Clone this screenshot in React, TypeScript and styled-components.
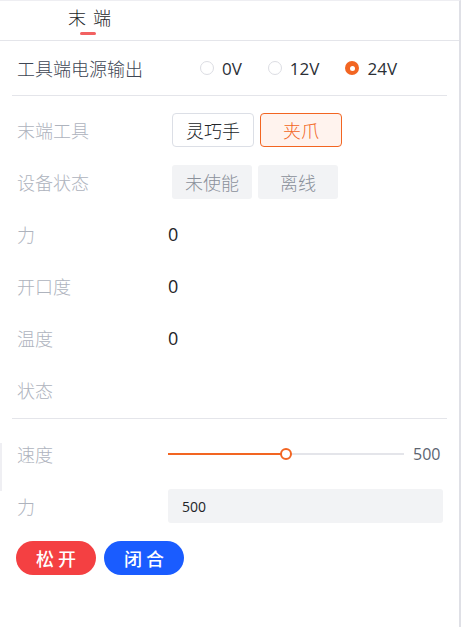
import React, { useState } from 'react';
import styled, { createGlobalStyle } from 'styled-components';

const GlobalStyle = createGlobalStyle`
  html, body {
    margin: 0;
    padding: 0;
    background: #ffffff;
  }
  body {
    font-family: "Open Sans", "Noto Sans CJK SC", sans-serif;
  }
  * {
    box-sizing: border-box;
  }
`;

const Panel = styled.div`
  position: relative;
  width: 461px;
  height: 627px;
  background: #ffffff;
  border-top: 1px solid #eeeef2;
  border-right: 2px solid #dfe0e6;
  overflow: hidden;
`;

const TabBar = styled.div`
  height: 40px;
  border-bottom: 1px solid #e4e5ea;
  display: flex;
  padding-left: 68px;
`;

const Tab = styled.div`
  position: relative;
  font-size: 18px;
  font-weight: 300;
  line-height: 34px;
  letter-spacing: 7px;
  color: #222428;

  &::after {
    content: '';
    position: absolute;
    left: 12px;
    bottom: 5px;
    width: 16px;
    height: 3px;
    border-radius: 2px;
    background: #f26161;
  }
`;

const Section = styled.div<{ $pt?: number; $pb?: number; $divider?: boolean }>`
  margin: 0 12px;
  padding: ${({ $pt = 0 }) => $pt}px 0 ${({ $pb = 0 }) => $pb}px 5px;
  border-bottom: ${({ $divider }) => ($divider ? '1px solid #e4e5ea' : 'none')};
`;

const Row = styled.div<{ $h?: number }>`
  display: flex;
  align-items: center;
  height: ${({ $h = 52 }) => $h}px;
`;

const Label = styled.div<{ $dark?: boolean; $w?: number }>`
  width: ${({ $w = 151 }) => $w}px;
  flex-shrink: 0;
  font-size: 18px;
  font-weight: 300;
  color: ${({ $dark }) => ($dark ? '#3d4553' : '#aeb3bd')};
`;

const RadioGroup = styled.div`
  display: flex;
  align-items: center;
  gap: 26px;
`;

const RadioItem = styled.label`
  display: flex;
  align-items: center;
  gap: 8px;
  font-size: 17px;
  color: #2b2f36;
  cursor: pointer;
`;

const RadioDot = styled.span<{ $on: boolean }>`
  width: 14px;
  height: 14px;
  border-radius: 50%;
  border: ${({ $on }) => ($on ? 'none' : '1.5px solid #dcdde3')};
  background: ${({ $on }) => ($on ? '#f26522' : '#ffffff')};
  display: flex;
  align-items: center;
  justify-content: center;

  &::after {
    content: '';
    width: 5px;
    height: 5px;
    border-radius: 50%;
    background: #ffffff;
    display: ${({ $on }) => ($on ? 'block' : 'none')};
  }
`;

const Options = styled.div`
  display: flex;
  gap: 6px;
  margin-left: 4px;
`;

const ToolButton = styled.button<{ $active: boolean }>`
  width: 82px;
  height: 34px;
  border-radius: 4px;
  font-family: inherit;
  font-size: 18px;
  font-weight: 300;
  cursor: pointer;
  border: 1px solid ${({ $active }) => ($active ? '#f26522' : '#dcdfe6')};
  background: ${({ $active }) => ($active ? '#fff3ee' : '#ffffff')};
  color: ${({ $active }) => ($active ? '#f26522' : '#222428')};
  padding: 0;
`;

const StatusTag = styled.div`
  width: 80px;
  height: 34px;
  border-radius: 3px;
  background: #f2f3f5;
  color: #8a909a;
  font-size: 18px;
  font-weight: 300;
  display: flex;
  align-items: center;
  justify-content: center;
`;

const Value = styled.div`
  font-size: 18px;
  color: #222428;
`;

const SpeedRow = styled(Row)`
  &::before {
    content: '';
    position: absolute;
    left: 0;
    top: 442px;
    width: 2px;
    height: 48px;
    background: #efeff3;
  }
`;

const SliderWrap = styled.div`
  position: relative;
  width: 236px;
  height: 14px;
  display: flex;
  align-items: center;
`;

const Track = styled.div`
  width: 100%;
  height: 2px;
  background: #e4e5ea;
`;

const Fill = styled.div`
  position: absolute;
  left: 0;
  height: 2px;
  background: #f26522;
`;

const Thumb = styled.div`
  position: absolute;
  width: 12px;
  height: 12px;
  margin-left: -6px;
  border-radius: 50%;
  border: 2px solid #f26522;
  background: #ffffff;
`;

const SliderValue = styled.div`
  margin-left: 9px;
  font-size: 16px;
  color: #5c6470;
`;

const Input = styled.input`
  width: 275px;
  height: 34px;
  border: none;
  border-radius: 3px;
  background: #f2f3f5;
  padding: 0 14px;
  font-family: inherit;
  font-size: 14px;
  color: #222428;
  outline: none;
`;

const Actions = styled.div`
  display: flex;
  gap: 8px;
  margin: 9px 0 0 16px;
`;

const PillButton = styled.button<{ $color: string }>`
  width: 80px;
  height: 34px;
  border: none;
  border-radius: 17px;
  background: ${({ $color }) => $color};
  color: #ffffff;
  font-family: inherit;
  font-size: 18px;
  font-weight: 500;
  letter-spacing: 4px;
  padding: 0 0 0 4px;
  cursor: pointer;
`;

const voltages = ['0V', '12V', '24V'];

const App: React.FC = () => {
  const [voltage, setVoltage] = useState('24V');
  const [tool, setTool] = useState('夹爪');
  const speed = 500;
  const pct = speed / 1000;

  return (
    <Panel>
      <GlobalStyle />
      <TabBar>
        <Tab>末端</Tab>
      </TabBar>

      <Section $divider>
        <Row $h={54}>
          <Label $dark $w={183}>工具端电源输出</Label>
          <RadioGroup>
            {voltages.map((v) => (
              <RadioItem key={v} onClick={() => setVoltage(v)}>
                <RadioDot $on={voltage === v} />
                {v}
              </RadioItem>
            ))}
          </RadioGroup>
        </Row>
      </Section>

      <Section $pt={8} $pb={2} $divider>
        <Row>
          <Label>末端工具</Label>
          <Options>
            {['灵巧手', '夹爪'].map((t) => (
              <ToolButton key={t} $active={tool === t} onClick={() => setTool(t)}>
                {t}
              </ToolButton>
            ))}
          </Options>
        </Row>
        <Row>
          <Label>设备状态</Label>
          <Options>
            <StatusTag>未使能</StatusTag>
            <StatusTag>离线</StatusTag>
          </Options>
        </Row>
        <Row>
          <Label>力</Label>
          <Value>0</Value>
        </Row>
        <Row>
          <Label>开口度</Label>
          <Value>0</Value>
        </Row>
        <Row>
          <Label>温度</Label>
          <Value>0</Value>
        </Row>
        <Row>
          <Label>状态</Label>
        </Row>
      </Section>

      <Section $pt={9}>
        <SpeedRow>
          <Label>速度</Label>
          <SliderWrap>
            <Track />
            <Fill style={{ width: `${pct * 100}%` }} />
            <Thumb style={{ left: `${pct * 100}%` }} />
          </SliderWrap>
          <SliderValue>{speed}</SliderValue>
        </SpeedRow>
        <Row>
          <Label>力</Label>
          <Input defaultValue="500" />
        </Row>
      </Section>

      <Actions>
        <PillButton $color="#f44042">松开</PillButton>
        <PillButton $color="#1a5cff">闭合</PillButton>
      </Actions>
    </Panel>
  );
};

export default App;
